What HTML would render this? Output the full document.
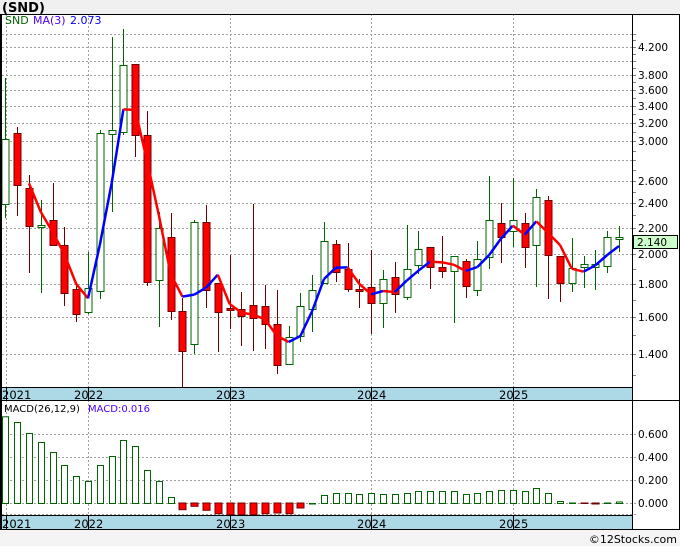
<!DOCTYPE html>
<html><head><meta charset="utf-8"><style>
body{margin:0;width:680px;height:546px;background:#fff;overflow:hidden;font-family:"DejaVu Sans","Liberation Sans",sans-serif}
svg text{font-family:"DejaVu Sans","Liberation Sans",sans-serif}
</style></head><body>
<svg id="s" width="680" height="546" xmlns="http://www.w3.org/2000/svg">
<rect x="0" y="0" width="680" height="14" fill="#f0f0f0"/>
<text x="2" y="12" font-size="13" font-weight="bold" fill="#000">(SND)</text>
<rect x="0" y="530" width="680" height="16" fill="#f4f4f4"/>
<text x="677" y="543" font-size="11" fill="#000" text-anchor="end">©12Stocks.com</text>
<g id="g"></g>
</svg>
<script>
var g=document.getElementById('g'),h='';
function L(x1,y1,x2,y2,c,w,d){h+='<line x1="'+x1+'" y1="'+y1+'" x2="'+x2+'" y2="'+y2+'" stroke="'+c+'" stroke-width="'+(w||1)+'"'+(d?' stroke-dasharray="'+d+'"':'')+'/>';}
function R(x,y,w,hh,f,s){h+='<rect x="'+x+'" y="'+y+'" width="'+w+'" height="'+hh+'" fill="'+f+'"'+(s?' stroke="'+s+'"':'')+'/>';}
function T(x,y,t,c,a,sz){h+='<text x="'+x+'" y="'+y+'" font-size="'+(sz||10.5)+'" fill="'+(c||'#000')+'"'+(a?' text-anchor="'+a+'"':'')+'>'+t+'</text>';}
function py(p){return 448-279.4*Math.log(p);}
[4.4,4.2,4.0,3.8,3.6,3.4,3.2,3.0,2.8,2.6,2.4,2.2,2.0,1.8,1.6,1.4].forEach(function(p){var y=Math.round(py(p))+.5;L(2,y,637,y,'#a0a0a0',1,'2,2');});
[4.2,3.8,3.6,3.4,3.2,3.0,2.6,2.4,2.2,2.0,1.8,1.6,1.4].forEach(function(p){T(638,Math.round(py(p))+4,p.toFixed(3));});
for(var p=1.3;p<4.45;p+=0.1){var y=Math.round(py(p))+.5;L(632,y,636,y,'#808080');}
var yrs=[[6,'2021'],[88,'2022'],[230,'2023'],[371,'2024'],[513,'2025']];
yrs.forEach(function(a){L(a[0]+.5,14,a[0]+.5,387,'#a0a0a0',1,'2,2');L(a[0]+.5,400,a[0]+.5,515,'#a0a0a0',1,'2,2');});
[434,457,480,503,514].forEach(function(y){L(2,y+.5,637,y+.5,'#a0a0a0',1,'2,2');});
[[434,'0.600'],[457,'0.400'],[480,'0.200'],[503,'0.000']].forEach(function(a){T(638,a[0]+4,a[1]);});
var C=[[139,204,78,218,1],[133,185,127,216,0],[188,226,175,273,0],[225,227,200,293,1],[220,245,183,245,0],[245,293,227,306,0],[289,314,283,322,0],
[288,312,252,314,1],[133,291,130,299,1],[130,134,37,212,1],[65,132,29,135,1],[64,135,64,157,0],[135,282,111,286,0],[228,280,212,327,1],[237,311,213,320,0],[311,351,298,387,0],[222,344,220,354,1],[222,290,205,308,0],[283,312,283,352,0],
[308,310,255,329,0],[309,316,292,346,0],[305,318,204,351,0],[306,324,285,349,0],[324,365,290,374,0],[337,364,326,364,1],[306,336,293,342,1],[290,309,275,332,1],[241,283,222,283,1],[244,272,240,282,0],[269,289,243,292,0],[289,291,279,308,0],
[287,303,250,334,0],[279,303,270,328,1],[277,294,262,313,0],[269,297,225,300,1],[249,265,231,274,1],[247,267,247,289,0],[267,271,236,278,0],[256,271,257,323,1],[261,286,259,298,0],[259,290,241,296,1],[220,257,176,269,1],[223,237,203,263,0],
[220,231,178,247,1],[223,247,213,268,0],[197,245,189,287,1],[200,255,196,299,0],[256,283,256,302,0],[268,283,238,292,1],[264,267,256,288,1],[264,267,250,290,1],[237,266,231,273,1],[237,239,226,252,1]];
function cx(k){return 88+(k-7)*11.8;}
var closes=[];
C.forEach(function(c,k){var x=Math.round(cx(k));var gc=c[4]?'#006400':'#700000';
L(x+.5,c[2],x+.5,c[3],gc);
if(c[4])R(x-3,c[0]+.5,7,Math.max(c[1]-c[0],1),'#fff','#006400');else R(x-3,c[0]+.5,7,Math.max(c[1]-c[0],1),'#ff0000','#700000');
closes.push(c[4]?c[0]:c[1]);});
var ma=[];for(var k=2;k<C.length;k++){ma[k]=(closes[k]+closes[k-1]+closes[k-2])/3;}
for(var k=3;k<C.length;k++){var col=ma[k]<ma[k-1]?'#0000ff':'#ff0000';L(cx(k-1),ma[k-1],cx(k),ma[k],col,2.5);}
var M=[86.7,81,70,61,51,38,27,22,38,47,63,57,33,22,6,-6.7,-3.3,-7.3,-10.7,-11.7,-11.7,-11.7,-10.7,-10,-10.7,-5,0,8,10,10,9,10,9,9,10,12,12,12,12,9,10,12,13,13,12,15,10,2,0.5,-0.5,-1,0.5,1.5];
M.forEach(function(v,k){var x=Math.round(cx(k))-3;
if(v>=0)R(x+.5,503-v+.5,6,Math.max(v,0.5),'#fff','#006400');else R(x,503,7,-v,'#ff0000','#700000');});
R(0,387,632,13,'#add8e6');R(0,515,632,15,'#add8e6');
L(0,387.5,632,387.5,'#000');L(0,400.5,632,400.5,'#000');L(0,515.5,632,515.5,'#000');
yrs.forEach(function(a){L(a[0]+.5,387,a[0]+.5,400,'#000');L(a[0]+.5,515,a[0]+.5,530,'#000');var tx=a[0]<20?2:a[0]-14;T(tx,399,a[1],'#000','',11.5);T(tx,528,a[1],'#000','',11.5);});
L(0,14.5,680,14.5,'#000');L(1,14,1,530,'#000',2);L(679.5,14,679.5,530,'#000');L(632.5,14,632.5,530,'#000');L(0,529.5,680,529.5,'#000');
L(632,400.5,680,400.5,'#000');
T(5,24,'SND','#006400','',11);T(33,24,'MA(3)','#5000ff','',11);T(70,24,'2.073','#0000ff','',11);
T(4,412,'MACD(26,12,9)','#000','',10);T(88,412,'MACD:0.016','#5000ff','',10);
R(633.5,235.5,44,13,'#ccffcc','#000');T(637,246,'2.140');
g.innerHTML=h;
</script>
</body></html>
